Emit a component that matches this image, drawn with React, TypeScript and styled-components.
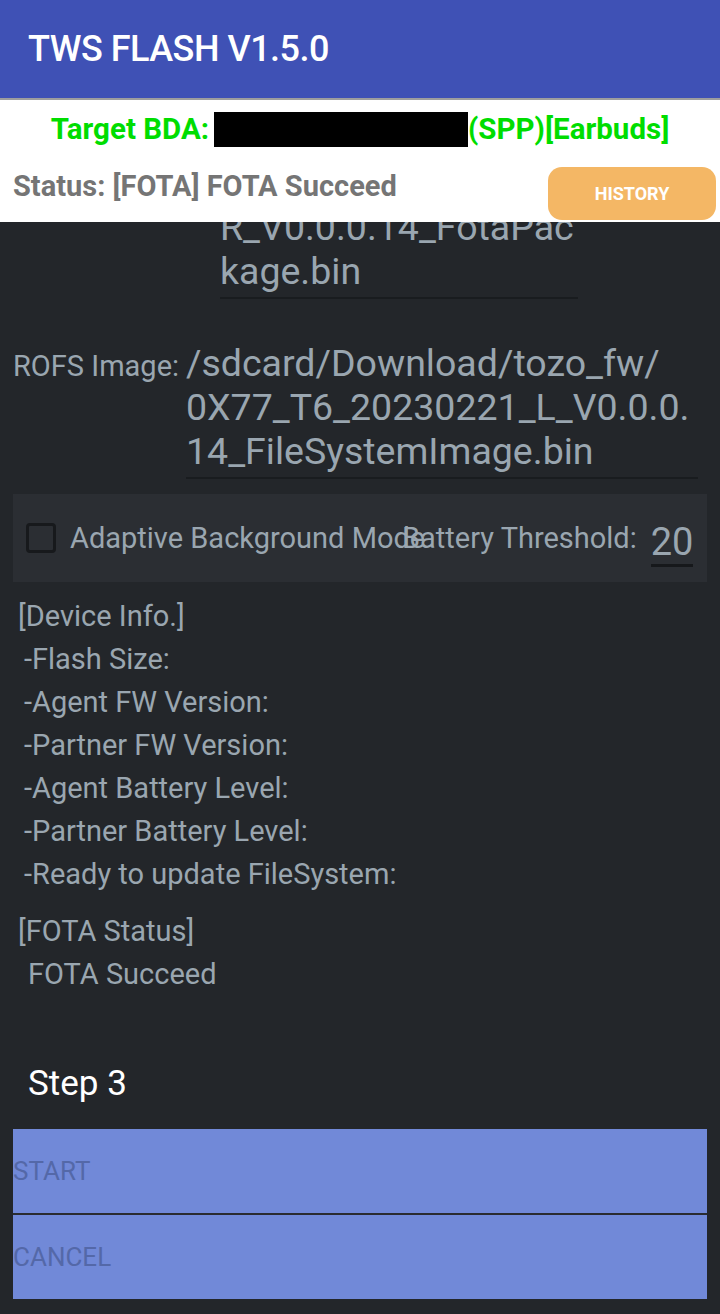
import React from "react";
import styled, { createGlobalStyle } from "styled-components";

const GlobalStyle = createGlobalStyle`
  html, body {
    margin: 0;
    padding: 0;
    background: #23262a;
    font-family: Roboto, "Noto Sans", "Liberation Sans", sans-serif;
  }
  * {
    box-sizing: border-box;
  }
`;

const Screen = styled.div`
  width: 720px;
  height: 1314px;
  display: flex;
  flex-direction: column;
  background: #23262a;
  overflow: hidden;
`;

const AppBar = styled.header`
  height: 98px;
  flex: none;
  display: flex;
  align-items: center;
  padding-left: 28px;
  background: #3f51b5;
  border-bottom: 2px solid #9e9e9e;
  box-sizing: content-box;
`;

const Title = styled.h1`
  margin: 0;
  color: #ffffff;
  font-size: 36px;
  font-weight: 500;
  letter-spacing: -0.5px;
`;

const Header = styled.section`
  flex: none;
  height: 122px;
  background: #ffffff;
  display: flex;
  flex-direction: column;
`;

const TargetLine = styled.div`
  height: 58px;
  display: flex;
  align-items: center;
  justify-content: center;
  color: #00dd00;
  font-size: 29.5px;
  font-weight: 700;
`;

const Redacted = styled.span`
  display: inline-block;
  width: 254px;
  height: 35px;
  margin-left: 5px;
  background: #000000;
`;

const StatusRow = styled.div`
  flex: 1;
  display: flex;
  align-items: center;
  justify-content: space-between;
  padding: 0 4px 2px 13px;
`;

const StatusText = styled.span`
  color: #757575;
  font-size: 29px;
  font-weight: 700;
  margin-top: -7px;
`;

const HistoryButton = styled.button`
  width: 168px;
  height: 53px;
  border: none;
  border-radius: 14px;
  background: #f4b765;
  color: #ffffff;
  font-family: inherit;
  font-size: 18px;
  font-weight: 700;
  margin-top: 8px;
`;

const Body = styled.main`
  flex: 1;
  display: flex;
  flex-direction: column;
  padding: 0 13px;
  overflow: hidden;
`;

const FieldValue = styled.div<{ $width: number }>`
  width: ${(p) => p.$width}px;
  color: #9aa6b0;
  font-size: 37.5px;
  line-height: 44px;
  padding-bottom: 4px;
  border-bottom: 2px solid #191c1f;
  word-break: break-all;
`;

/* the first path field is scrolled partly out of view */
const ClippedField = styled.div`
  margin-top: -17px;
  padding-left: 207px;
`;

const FieldRow = styled.div`
  display: flex;
  align-items: baseline;
  margin-top: 42px;
`;

const FieldLabel = styled.span`
  width: 173px;
  flex: none;
  color: #9aa6b0;
  font-size: 29px;
  white-space: nowrap;
`;

const OptionsPanel = styled.div`
  height: 88px;
  flex: none;
  margin-top: 15px;
  display: flex;
  align-items: center;
  background: #2b2e33;
`;

const CheckGroup = styled.label`
  width: 389px;
  flex: none;
  display: flex;
  align-items: center;
  white-space: nowrap;
  overflow: visible;
`;

const CheckBox = styled.span`
  width: 30px;
  height: 30px;
  margin: 0 14px 0 13px;
  flex: none;
  border: 3px solid #17191c;
  border-radius: 4px;
`;

const OptionText = styled.span`
  color: #9aa6b0;
  font-size: 29px;
  white-space: nowrap;
`;

const ThresholdInput = styled.span`
  margin-left: 14px;
  width: 42px;
  color: #9aa6b0;
  font-size: 38px;
  line-height: 44px;
  padding-top: 11px;
  border-bottom: 3px solid #16181b;
  text-align: center;
`;

const InfoBlock = styled.div`
  display: flex;
  flex-direction: column;
  margin-top: 13px;
`;

const InfoHeading = styled.div`
  color: #9aa6b0;
  font-size: 29px;
  line-height: 43px;
  padding-left: 5px;
`;

const InfoLine = styled.div<{ $indent?: number }>`
  color: #9aa6b0;
  font-size: 29px;
  line-height: 43px;
  padding-left: ${(p) => p.$indent ?? 11}px;
`;

const Spacer = styled.div<{ $h: number }>`
  height: ${(p) => p.$h}px;
  flex: none;
`;

const StepTitle = styled.div`
  color: #ffffff;
  font-size: 35px;
  line-height: 44px;
  padding-left: 15px;
`;

const ActionButton = styled.button`
  height: 84px;
  width: 100%;
  flex: none;
  display: flex;
  align-items: center;
  padding: 0;
  border: none;
  background: #7189d8;
  color: #5468a8;
  font-family: inherit;
  font-size: 26px;
  text-align: left;
`;

const ButtonDivider = styled.div`
  height: 2px;
  flex: none;
  background: #2a2c30;
`;

const deviceInfo = [
  "-Flash Size:",
  "-Agent FW Version:",
  "-Partner FW Version:",
  "-Agent Battery Level:",
  "-Partner Battery Level:",
  "-Ready to update FileSystem:",
];

export default function App() {
  return (
    <>
      <GlobalStyle />
      <Screen>
        <AppBar>
          <Title>TWS FLASH V1.5.0</Title>
        </AppBar>
        <Header>
          <TargetLine>
            Target BDA:
            <Redacted />
            (SPP)[Earbuds]
          </TargetLine>
          <StatusRow>
            <StatusText>Status: [FOTA] FOTA Succeed</StatusText>
            <HistoryButton>HISTORY</HistoryButton>
          </StatusRow>
        </Header>
        <Body>
          <ClippedField>
            <FieldValue $width={358}>
              R_V0.0.0.14_FotaPac
              <br />
              kage.bin
            </FieldValue>
          </ClippedField>
          <FieldRow>
            <FieldLabel>ROFS Image:</FieldLabel>
            <FieldValue $width={512}>
              /sdcard/Download/tozo_fw/
              <br />
              0X77_T6_20230221_L_V0.0.0.
              <br />
              14_FileSystemImage.bin
            </FieldValue>
          </FieldRow>
          <OptionsPanel>
            <CheckGroup>
              <CheckBox />
              <OptionText>Adaptive Background Mode</OptionText>
            </CheckGroup>
            <OptionText>Battery Threshold:</OptionText>
            <ThresholdInput>20</ThresholdInput>
          </OptionsPanel>
          <InfoBlock>
            <InfoHeading>[Device Info.]</InfoHeading>
            {deviceInfo.map((line) => (
              <InfoLine key={line}>{line}</InfoLine>
            ))}
            <Spacer $h={14} />
            <InfoHeading>[FOTA Status]</InfoHeading>
            <InfoLine $indent={15}>FOTA Succeed</InfoLine>
          </InfoBlock>
          <Spacer $h={66} />
          <StepTitle>Step 3</StepTitle>
          <Spacer $h={23} />
          <ActionButton>START</ActionButton>
          <ButtonDivider />
          <ActionButton>CANCEL</ActionButton>
        </Body>
      </Screen>
    </>
  );
}
